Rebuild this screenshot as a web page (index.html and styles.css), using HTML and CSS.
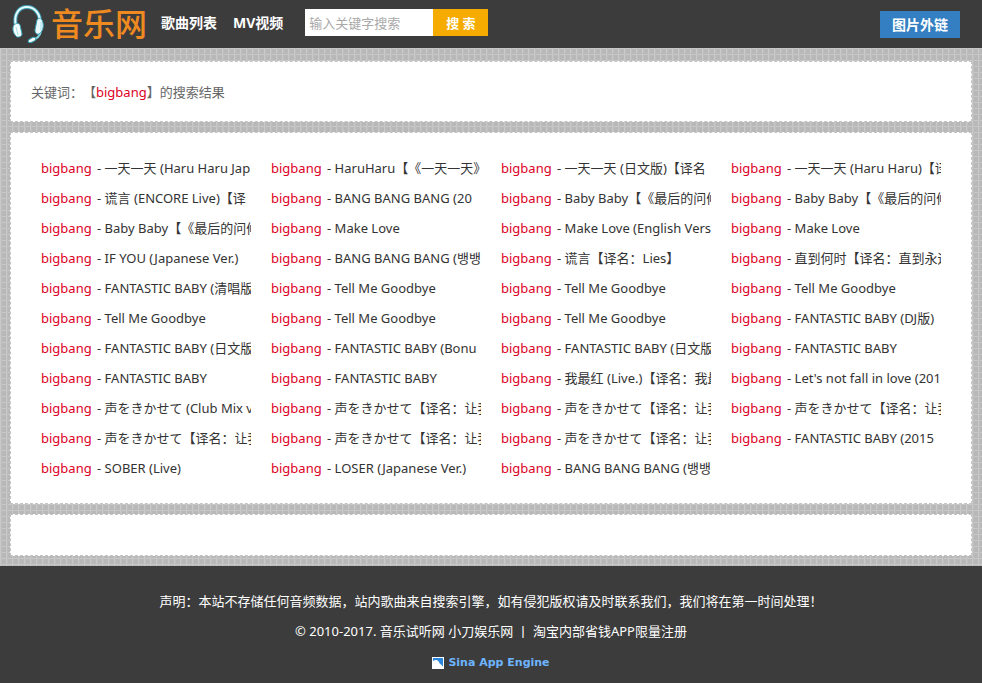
FILE: index.html
```html
<!DOCTYPE html>
<html lang="zh-CN">
<head>
<meta charset="utf-8">
<meta name="viewport" content="width=device-width, initial-scale=1">
<title>bigbang - 音乐网</title>
<link rel="stylesheet" href="styles.css">
</head>
<body>
<header class="header">
  <a class="logo" href="#">
    <svg class="logo-icon" viewBox="0 0 32 38" aria-hidden="true">
      <path d="M4 21C1 8 8 2 15 2s14 6 13 18" fill="none" stroke="#3f9fb3" stroke-width="4"/>
      <path d="M4 21C1 8 8 2 15 2s14 6 13 18" fill="none" stroke="#e4fbff" stroke-width="2"/>
      <path d="M29 26c-1 5-4 8-9 9" fill="none" stroke="#7fd6e2" stroke-width="2"/>
      <path d="M2 20c2-2 5-2 6 0l2 9c0 3-5 4-6 2-3-3-4-8-2-11z" fill="#f4feff" stroke="#3aa5ba"/>
      <path d="M25 15c2-3 5-2 6 3 1 5-1 9-4 11-3 1-4-2-4-4z" fill="#e8fafd" stroke="#3aa5ba"/>
      <path d="M4 22l2 8M29 17v9" stroke="#a6dfe9" stroke-width="1"/>
      <ellipse cx="20" cy="35" rx="4" ry="2" transform="rotate(-25 20 35)" fill="#fff" stroke="#3aa5ba"/>
    </svg>
    <span class="logo-text">音乐网</span>
  </a>
  <nav class="nav">
    <a href="#">歌曲列表</a>
    <a href="#">MV视频</a>
  </nav>
  <form class="search">
    <input type="text" placeholder="输入关键字搜索" aria-label="输入关键字搜索">
    <button type="button">搜 索</button>
  </form>
  <a class="pic-link" href="#">图片外链</a>
</header>
<main class="main">
  <section class="panel keyword">关键词：【<em>bigbang</em>】的搜索结果</section>
  <section class="panel results">
    <ul class="songs">
      <li><a href="#"><em>bigbang</em> - 一天一天 (Haru Haru Jap</a></li>
      <li><a href="#"><em>bigbang</em> - HaruHaru【《一天一天》</a></li>
      <li><a href="#"><em>bigbang</em> - 一天一天 (日文版)【译名</a></li>
      <li><a href="#"><em>bigbang</em> - 一天一天 (Haru Haru)【译</a></li>
      <li><a href="#"><em>bigbang</em> - 谎言 (ENCORE Live)【译</a></li>
      <li><a href="#"><em>bigbang</em> - BANG BANG BANG (20</a></li>
      <li><a href="#"><em>bigbang</em> - Baby Baby【《最后的问候</a></li>
      <li><a href="#"><em>bigbang</em> - Baby Baby【《最后的问候</a></li>
      <li><a href="#"><em>bigbang</em> - Baby Baby【《最后的问候</a></li>
      <li><a href="#"><em>bigbang</em> - Make Love</a></li>
      <li><a href="#"><em>bigbang</em> - Make Love (English Vers</a></li>
      <li><a href="#"><em>bigbang</em> - Make Love</a></li>
      <li><a href="#"><em>bigbang</em> - IF YOU (Japanese Ver.)</a></li>
      <li><a href="#"><em>bigbang</em> - BANG BANG BANG (뱅뱅</a></li>
      <li><a href="#"><em>bigbang</em> - 谎言【译名：Lies】</a></li>
      <li><a href="#"><em>bigbang</em> - 直到何时【译名：直到永远</a></li>
      <li><a href="#"><em>bigbang</em> - FANTASTIC BABY (清唱版</a></li>
      <li><a href="#"><em>bigbang</em> - Tell Me Goodbye</a></li>
      <li><a href="#"><em>bigbang</em> - Tell Me Goodbye</a></li>
      <li><a href="#"><em>bigbang</em> - Tell Me Goodbye</a></li>
      <li><a href="#"><em>bigbang</em> - Tell Me Goodbye</a></li>
      <li><a href="#"><em>bigbang</em> - Tell Me Goodbye</a></li>
      <li><a href="#"><em>bigbang</em> - Tell Me Goodbye</a></li>
      <li><a href="#"><em>bigbang</em> - FANTASTIC BABY (DJ版)</a></li>
      <li><a href="#"><em>bigbang</em> - FANTASTIC BABY (日文版</a></li>
      <li><a href="#"><em>bigbang</em> - FANTASTIC BABY (Bonu</a></li>
      <li><a href="#"><em>bigbang</em> - FANTASTIC BABY (日文版</a></li>
      <li><a href="#"><em>bigbang</em> - FANTASTIC BABY</a></li>
      <li><a href="#"><em>bigbang</em> - FANTASTIC BABY</a></li>
      <li><a href="#"><em>bigbang</em> - FANTASTIC BABY</a></li>
      <li><a href="#"><em>bigbang</em> - 我最红 (Live.)【译名：我最</a></li>
      <li><a href="#"><em>bigbang</em> - Let's not fall in love (201</a></li>
      <li><a href="#"><em>bigbang</em> - 声をきかせて (Club Mix v</a></li>
      <li><a href="#"><em>bigbang</em> - 声をきかせて【译名：让我</a></li>
      <li><a href="#"><em>bigbang</em> - 声をきかせて【译名：让我</a></li>
      <li><a href="#"><em>bigbang</em> - 声をきかせて【译名：让我</a></li>
      <li><a href="#"><em>bigbang</em> - 声をきかせて【译名：让我</a></li>
      <li><a href="#"><em>bigbang</em> - 声をきかせて【译名：让我</a></li>
      <li><a href="#"><em>bigbang</em> - 声をきかせて【译名：让我</a></li>
      <li><a href="#"><em>bigbang</em> - FANTASTIC BABY (2015</a></li>
      <li><a href="#"><em>bigbang</em> - SOBER (Live)</a></li>
      <li><a href="#"><em>bigbang</em> - LOSER (Japanese Ver.)</a></li>
      <li><a href="#"><em>bigbang</em> - BANG BANG BANG (뱅뱅</a></li>
    </ul>
  </section>
  <section class="panel blank"></section>
</main>
<footer class="footer">
  <p>声明：本站不存储任何音频数据，站内歌曲来自搜索引擎，如有侵犯版权请及时联系我们，我们将在第一时间处理！</p>
  <p>© 2010-2017. <a href="#">音乐试听网</a> <a href="#">小刀娱乐网</a> 丨 <a href="#">淘宝内部省钱APP限量注册</a></p>
  <a class="sae" href="#">
    <svg viewBox="0 0 12 12" aria-hidden="true">
      <rect width="12" height="12" fill="#fff"/>
      <path d="M1 1h10v9C10 7 8 8 7 5 5 2 3 3 1 4z" fill="#2b87de"/>
    </svg>
    <span>Sina App Engine</span>
  </a>
</footer>
</body>
</html>
```

FILE: styles.css
```css
* { box-sizing: border-box; }

body {
  margin: 0;
  min-height: 100vh;
  display: flex;
  flex-direction: column;
  font: 13px/30px "Noto Sans", "Noto Sans CJK SC", "Noto Sans CJK JP", "Noto Sans CJK KR", sans-serif;
  text-spacing-trim: space-all;
  color: #666;
  background-color: #b8b8b8;
  background-image:
    linear-gradient(90deg, #c8c8c8 1px, #bebebe 1px, #bebebe 2px, transparent 2px),
    linear-gradient(#c8c8c8 1px, transparent 1px);
  background-size: 6px 6px;
}

a { color: inherit; text-decoration: none; }
em { color: #dd0025; font-style: normal; }

.header {
  display: flex;
  align-items: center;
  height: 48px;
  padding: 0 22px 0 12px;
  background: #3c3c3c;
  color: #fff;
}

.logo { display: flex; align-items: center; height: 46px; gap: 7px; }
.logo-icon { width: 32px; height: 38px; }
.logo-text {
  padding-bottom: 4px;
  color: #ee8a20;
  font: 500 32px/40px "Noto Sans CJK SC", sans-serif;
}

.nav {
  display: flex;
  gap: 16px;
  margin: 0 22px 2px 14px;
  font-size: 14px;
  font-weight: 700;
}

.search { display: flex; height: 27px; margin-bottom: 3px; }
.search input {
  width: 128px;
  padding: 0 4px;
  border: 0;
  background: #fff;
  color: #333;
  font: inherit;
  line-height: 20px;
}
.search input::placeholder { color: #a9a9a9; }
.search button {
  width: 55px;
  padding: 0;
  border: 0;
  background: #f5ab00;
  color: #fff;
  font: inherit;
  font-weight: 700;
  line-height: 26px;
}

.pic-link {
  margin-left: auto;
  padding: 0 12px;
  background: #337fc2;
  color: #fff;
  font-size: 14px;
  font-weight: 700;
  line-height: 27px;
}

.main {
  display: grid;
  gap: 10px;
  padding: 13px 10px 10px;
}

.panel { border: 1px dashed #c4c4c4; background: #fff; }
.keyword { padding: 15px 20px 14px; }
.results { padding: 20px 30px; }
.blank { min-height: 42px; }

.songs {
  display: grid;
  grid-template-columns: repeat(4, minmax(0, 1fr));
  column-gap: 20px;
  margin: 0;
  padding: 0;
  list-style: none;
  color: #333;
}
.songs li { overflow: hidden; white-space: nowrap; }
.songs em { padding-right: 2px; }

.footer {
  flex: 1;
  padding: 20px 10px 3px;
  background: #3c3c3c;
  color: #fff;
  text-align: center;
}
.footer p { margin: 0; }

.sae {
  display: inline-flex;
  align-items: center;
  gap: 4px;
  color: #6db5ff;
  font: 700 11px/34px "DejaVu Sans", sans-serif;
}
.sae svg { width: 12px; height: 12px; }
```
